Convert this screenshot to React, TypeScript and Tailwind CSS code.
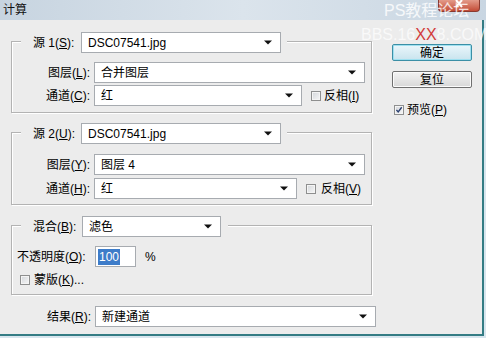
import React from 'react';

function Arrow() {
  return (
    <svg width="8" height="5" viewBox="0 0 8 5" className="shrink-0">
      <path d="M0 0.5h8L4 4.5z" fill="#101010" />
    </svg>
  );
}

function Select({ value, w }: { value: string; w: string }) {
  return (
    <div className={`${w} h-[21px] shrink-0 flex items-center justify-between border border-[#a7abb0] bg-white pl-[6px] pr-[8px]`}>
      <span className="whitespace-nowrap">{value}</span>
      <Arrow />
    </div>
  );
}

function Check({ checked = false }: { checked?: boolean }) {
  return (
    <div className="w-[10px] h-[10px] shrink-0 border border-[#8e8f8f] bg-gradient-to-br from-[#d3d6da] to-[#f7f7f7] shadow-[inset_0_0_0_1px_#f4f4f4] flex items-center justify-center">
      {checked && (
        <svg width="10" height="10" viewBox="0 0 10 10">
          <path d="M1.8 4.8L4 7.5L8.4 1.6" stroke="#2a3f70" strokeWidth="1.7" fill="none" />
        </svg>
      )}
    </div>
  );
}

function Key({ k }: { k: string }) {
  return (
    <>
      (<span className="underline underline-offset-[1px]">{k}</span>):
    </>
  );
}

const BOX = 'w-[361px] border border-[#b3b3b3] shadow-[inset_1px_1px_0_#fff,1px_1px_0_#fff] flex flex-col';

export default function App() {
  return (
    <div className="w-[486px] h-[338px] overflow-hidden relative bg-[#d8e6ee] flex flex-col text-[12px] leading-none text-black font-['Liberation_Sans','Noto_Sans_CJK_SC',sans-serif]">
      {/* title bar */}
      <div className="h-[20px] shrink-0 flex items-center pl-[3px] bg-gradient-to-r from-[#c7d4e0] via-[#dbe4ec] to-[#c9d6e2] text-[12px] text-[#111]">
        计算
      </div>

      {/* watermark + close */}
      <div className="absolute left-[438px] top-0 w-[42px] h-[12px] rounded-b-[4px] border border-t-0 border-[#8a3a30] bg-gradient-to-b from-[#e39a89] to-[#c24a36] flex items-start justify-center">
        <svg width="10" height="8" viewBox="0 0 10 8">
          <path d="M2 0L8 7M8 0L2 7" stroke="#fff" strokeWidth="2" />
        </svg>
      </div>
      <div className="absolute left-[384px] top-[3px] text-[16px] text-white/80 whitespace-nowrap">PS教程论坛</div>
      <div className="absolute left-[361px] top-[27px] text-[16px] text-white/70 whitespace-nowrap">
        BBS.16<span className="text-[#d23a3a]">XX</span>8.COM
      </div>

      {/* body */}
      <div className="flex-1 flex bg-[#ececec] border-r-2 border-b-2 border-[#347c84] mr-[2px] mb-[2px]">
        <div className="w-[381px] shrink-0 pl-[11px] flex flex-col">
          {/* source 1 */}
          <div className={`${BOX} mt-[21px] h-[72px]`}>
            <div className="-mt-[10px] ml-[9px] w-fit flex items-center gap-[4px] bg-[#ececec] pl-[12px] pr-[6px]">
              <span className="w-[44px] whitespace-nowrap">源 1<Key k="S" /></span>
              <Select value="DSC07541.jpg" w="w-[200px]" />
            </div>
            <div className="mt-[9px] flex items-center gap-[4px]">
              <span className="w-[78px] text-right whitespace-nowrap">图层<Key k="L" /></span>
              <Select value="合并图层" w="w-[271px]" />
            </div>
            <div className="mt-[2px] flex items-center gap-[4px]">
              <span className="w-[78px] text-right whitespace-nowrap">通道<Key k="C" /></span>
              <Select value="红" w="w-[208px]" />
              <div className="ml-[5px] flex items-center gap-[3px]">
                <Check />
                <span className="whitespace-nowrap">反相(<span className="underline underline-offset-[1px]">I</span>)</span>
              </div>
            </div>
          </div>

          {/* source 2 */}
          <div className={`${BOX} mt-[19px] h-[73px]`}>
            <div className="-mt-[10px] ml-[9px] w-fit flex items-center gap-[4px] bg-[#ececec] pl-[12px] pr-[6px]">
              <span className="w-[44px] whitespace-nowrap">源 2<Key k="U" /></span>
              <Select value="DSC07541.jpg" w="w-[200px]" />
            </div>
            <div className="mt-[10px] flex items-center gap-[4px]">
              <span className="w-[78px] text-right whitespace-nowrap">图层<Key k="Y" /></span>
              <Select value="图层 4" w="w-[271px]" />
            </div>
            <div className="mt-[3px] flex items-center gap-[4px]">
              <span className="w-[78px] text-right whitespace-nowrap">通道<Key k="H" /></span>
              <Select value="红" w="w-[203px]" />
              <div className="ml-[5px] flex items-center gap-[5px]">
                <Check />
                <span className="whitespace-nowrap">反相(<span className="underline underline-offset-[1px]">V</span>)</span>
              </div>
            </div>
          </div>

          {/* blending */}
          <div className={`${BOX} mt-[20px] h-[70px]`}>
            <div className="-mt-[10px] ml-[9px] w-fit flex items-center gap-[4px] bg-[#ececec] pl-[12px] pr-[7px]">
              <span className="w-[45px] whitespace-nowrap">混合<Key k="B" /></span>
              <Select value="滤色" w="w-[139px]" />
            </div>
            <div className="mt-[9px] pl-[5px] flex items-center gap-[4px]">
              <span className="w-[74px] whitespace-nowrap">不透明度<Key k="O" /></span>
              <div className="w-[41px] h-[21px] border border-[#a7abb0] bg-white flex items-center pl-[2px]">
                <span className="bg-[#3d7cc9] text-white px-[1px] py-[2px]">100</span>
              </div>
              <span className="ml-[5px]">%</span>
            </div>
            <div className="mt-[6px] h-[13px] pl-[8px] flex items-center gap-[4px]">
              <Check />
              <span className="whitespace-nowrap">蒙版(<span className="underline underline-offset-[1px]">K</span>)...</span>
            </div>
          </div>

          {/* result */}
          <div className="mt-[11px] flex items-center gap-[4px]">
            <span className="w-[80px] text-right whitespace-nowrap">结果<Key k="R" /></span>
            <Select value="新建通道" w="w-[281px]" />
          </div>
        </div>

        {/* buttons */}
        <div className="ml-[11px] pt-[24px] flex flex-col">
          <button className="w-[80px] h-[17px] rounded-[2px] border border-[#3b8fa6] bg-gradient-to-b from-[#eaf6fb] to-[#c9e4ee] shadow-[inset_0_0_0_1px_#9fe0f0] flex items-center justify-center">
            确定
          </button>
          <button className="mt-[10px] w-[80px] h-[17px] rounded-[2px] border border-[#707070] bg-gradient-to-b from-[#f3f3f3] to-[#d8d8d8] shadow-[inset_0_0_0_1px_#fbfbfb] flex items-center justify-center">
            复位
          </button>
          <div className="mt-[16px] ml-[2px] flex items-center gap-[3px]">
            <Check checked />
            <span className="whitespace-nowrap">预览(<span className="underline underline-offset-[1px]">P</span>)</span>
          </div>
        </div>
      </div>
    </div>
  );
}
